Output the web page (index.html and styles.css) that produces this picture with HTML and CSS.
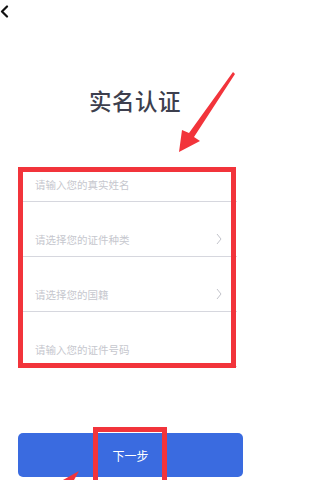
FILE: index.html
```html
<!DOCTYPE html>
<html lang="zh-CN">
<head>
<meta charset="utf-8">
<title>实名认证</title>
<link rel="stylesheet" href="styles.css">
</head>
<body>
<div class="page">
  <div class="topbar">
    <svg class="back" width="9" height="13" viewBox="0 0 9 13"><path d="M7 1.5 L2 6.5 L7 11.5" fill="none" stroke="#111" stroke-width="2.2" stroke-linecap="round" stroke-linejoin="round"/></svg>
  </div>
  <h1 class="title">实名认证</h1>
  <div class="form">
    <div class="row"><span class="ph">请输入您的真实姓名</span></div>
    <div class="row"><span class="ph">请选择您的证件种类</span><svg class="chev" width="6" height="12" viewBox="0 0 6 12"><path d="M1 1 L5 6 L1 11" fill="none" stroke="#c3c4cb" stroke-width="1"/></svg></div>
    <div class="row"><span class="ph">请选择您的国籍</span><svg class="chev" width="6" height="12" viewBox="0 0 6 12"><path d="M1 1 L5 6 L1 11" fill="none" stroke="#c3c4cb" stroke-width="1"/></svg></div>
    <div class="row"><span class="ph">请输入您的证件号码</span></div>
  </div>
  <button class="next">下一步</button>

  <div class="mark mark-form"></div>
  <div class="mark mark-btn"></div>
  <svg class="arrows" width="270" height="480" viewBox="0 0 270 480">
    <polygon points="233,72 235,74 194,137 200,141 179,152 182,130 189,133" fill="#f2343b"/>
    <polygon points="63,480 79,471 74,480" fill="#f2343b"/>
  </svg>
</div>
</body>
</html>
```

FILE: styles.css
```css
html, body {
  margin: 0;
  padding: 0;
  background: #ffffff;
}
body {
  font-family: "Noto Sans CJK SC", "Noto Sans", sans-serif;
}
.page {
  position: relative;
  width: 270px;
  height: 480px;
  overflow: hidden;
}
.topbar {
  height: 24px;
  padding-left: 0;
  padding-top: 5px;
  box-sizing: border-box;
}
.back {
  display: block;
}
.title {
  margin: 61px 0 0 0;
  height: 30px;
  line-height: 30px;
  font-size: 22.5px;
  font-weight: 500;
  color: #3d3f4e;
  text-align: center;
  letter-spacing: 0.5px;
}
.form {
  margin: 32px 33px 0 18px;
}
.row {
  height: 55px;
  box-sizing: border-box;
  border-bottom: 1px solid #d6d7de;
  display: flex;
  align-items: flex-end;
  justify-content: space-between;
  padding: 0 15px 9px 17px;
}
.ph {
  font-size: 10.5px;
  line-height: 15px;
  color: #c6c7ce;
}
.chev {
  display: block;
  margin-bottom: 2px;
}
.next {
  display: block;
  margin: 66px 0 0 18px;
  width: 225px;
  height: 44px;
  border: none;
  border-radius: 5px;
  background: #3a6be0;
  color: #ffffff;
  font-family: "Noto Sans CJK SC", "Noto Sans", sans-serif;
  font-size: 12px;
  padding: 0;
}
.mark {
  position: absolute;
  border: 5px solid #f2343b;
  box-sizing: border-box;
}
.mark-form {
  left: 18px;
  top: 167px;
  width: 218px;
  height: 201px;
}
.mark-btn {
  left: 93px;
  top: 427px;
  width: 74px;
  height: 70px;
}
.arrows {
  position: absolute;
  left: 0;
  top: 0;
  pointer-events: none;
}
```
